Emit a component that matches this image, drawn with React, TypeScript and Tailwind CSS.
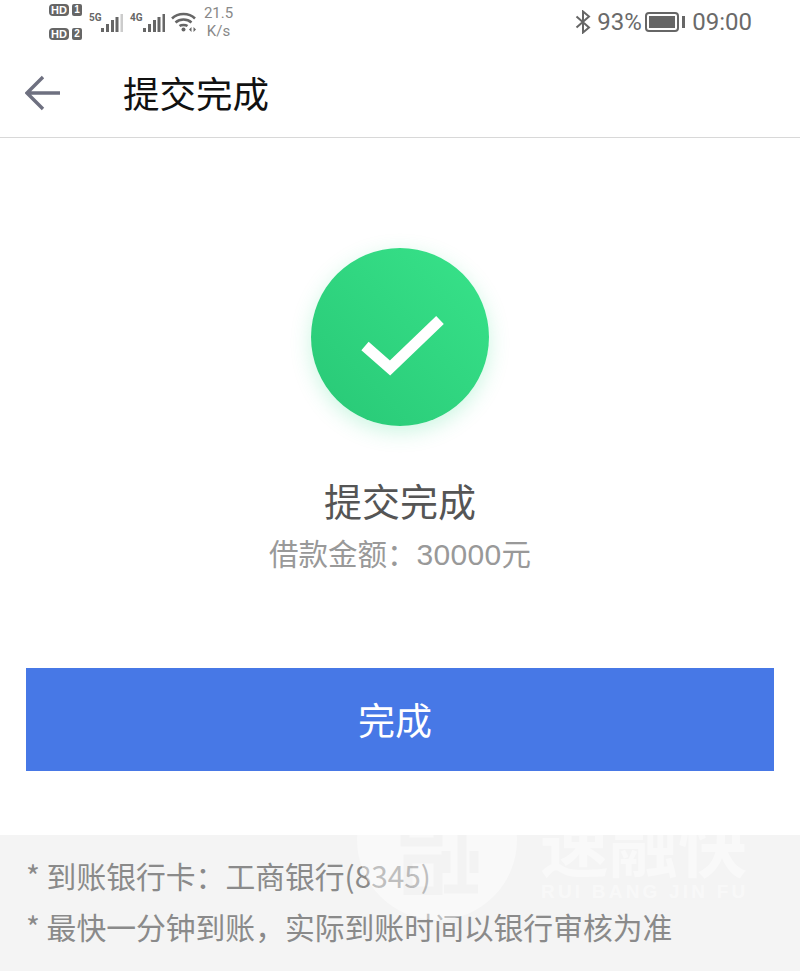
const cjk = "font-['Noto_Sans_CJK_SC','Noto_Sans',sans-serif]";
const COLON = "\uFF1A";
const COMMA = "\uFF0C";

const Signal = ({ last = "#666" }: { last?: string }) => (
  <svg width="22" height="18" viewBox="0 0 22 18">
    <rect x="0" y="14" width="3" height="4" fill="#666" />
    <rect x="5" y="10" width="3" height="8" fill="#666" />
    <rect x="10" y="6" width="3" height="12" fill="#666" />
    <rect x="14.5" y="3" width="3" height="15" fill="#666" />
    <rect x="19.5" y="0" width="2.5" height="18" fill={last} />
  </svg>
);

const SimBadge = ({ n }: { n: string }) => (
  <div className="flex items-center gap-[3px] font-['Liberation_Sans',sans-serif] font-bold text-white text-center">
    <span className="w-[20px] h-[12px] rounded-[4px] bg-[#666] text-[11px] leading-[12px]">HD</span>
    <span className="w-[10px] h-[12px] rounded-[2px] bg-[#666] text-[10px] leading-[12px]">{n}</span>
  </div>
);

const StatusBar = () => (
  <div className="h-[50px] flex justify-between font-['Roboto',sans-serif] text-[#666]">
    <div className="flex items-start pl-[49px] pt-[4px]">
      <div className="flex flex-col gap-[12px] w-[33px]">
        <SimBadge n="1" />
        <SimBadge n="2" />
      </div>
      <div className="flex items-start ml-[7px] mt-[8px]">
        <span className="w-[12px] text-[10px] leading-[11px] font-bold">5G</span>
        <div className="mt-[2px]">
          <Signal last="#ccc" />
        </div>
        <span className="ml-[7px] w-[13px] text-[10px] leading-[11px] font-bold">4G</span>
        <div className="mt-[2px]">
          <Signal />
        </div>
        <svg className="ml-[6px]" width="25" height="20" viewBox="0 0 25 20" fill="none" stroke="#666" strokeWidth="2.5">
          <path d="M1 6.5 C7 0.5 18 0.5 24 6.5" />
          <path d="M4.5 10.5 C9 6.5 16 6.5 20.5 10.5" />
          <path d="M8.5 14 C10.5 12.5 14.5 12.5 16.5 14" />
          <circle cx="12.5" cy="17.5" r="2" fill="#666" stroke="none" />
          <path d="M18 17.5 l2.5 -2.5 v5z M25 17.5 l-2.5 -2.5 v5z" fill="#666" stroke="none" />
        </svg>
      </div>
      <div className="ml-[6px] w-[33px] text-center text-[15px] leading-[18px] text-[#888]">
        <div>21.5</div>
        <div>K/s</div>
      </div>
    </div>
    <div className="flex items-center pr-[48px] pb-[6px] text-[24px] text-[#6a6a6a]">
      <svg width="16" height="24" viewBox="0 0 16 24" fill="none" stroke="#666" strokeWidth="2">
        <path d="M1.5 6.5 L14 17.5 L8 22.5 V1.5 L14 6.5 L1.5 17.5" />
      </svg>
      <span className="ml-[6px] w-[43px]">93%</span>
      <div className="ml-[5px] w-[34px] h-[20px] rounded-[4px] border-2 border-[#666] p-[2px]">
        <div className="h-full w-full bg-[#666]" />
      </div>
      <span className="ml-[3px] w-[3px] h-[12px] bg-[#666]" />
      <span className="ml-[7px]">09:00</span>
    </div>
  </div>
);

const App = () => {
  return (
    <div className={`w-[800px] h-[971px] bg-white flex flex-col overflow-hidden ${cjk}`}>
      <StatusBar />

      <div className="h-[88px] flex items-center border-b border-[#d8d8d8] pl-[25px] pb-[2px]">
        <svg width="36" height="36" viewBox="0 0 36 36" fill="none" stroke="#6e7080" strokeWidth="3.4">
          <path d="M35 18 H3 M18 2 L2 18 L18 34" />
        </svg>
        <h1 className="ml-[62px] text-[36.5px] leading-[48px] text-[#111] font-normal">提交完成</h1>
      </div>

      <div className="flex flex-col items-center pt-[110px]">
        <div className="w-[178px] h-[178px] rounded-full bg-gradient-to-tr from-[#28c876] to-[#38e38a] shadow-[0_6px_20px_rgba(50,220,140,0.25)] flex items-center justify-center">
          <svg className="mt-[14px] ml-[2px]" width="90" height="68" viewBox="0 0 90 68" fill="none" stroke="white" strokeWidth="11">
            <path d="M9 36 L34 58 L84 10" />
          </svg>
        </div>
        <h2 className="mt-[47px] text-[38px] leading-[54px] text-[#555] font-normal">提交完成</h2>
        <p className="mt-[5px] text-[29.5px] leading-[40px] text-[#999]">
          借款金额{COLON}
          <span className="font-['Liberation_Sans',sans-serif] text-[30px] tracking-[0.3px]">30000</span>元
        </p>
      </div>

      <div className="mt-[93px] mx-[26px] h-[103px] bg-[#4778e6] flex items-center justify-center">
        <span className="text-[37px] text-white pr-[10px]">完成</span>
      </div>

      <div className="mt-[64px] flex-1 bg-[#f4f4f4] relative overflow-hidden pl-[26px] pt-[17px] text-[29.8px] leading-[46px] text-[#8a8a8a]">
        <p>* 到账银行卡{COLON}工商银行(8345)</p>
        <p className="mt-[5px]">* 最快一分钟到账{COMMA}实际到账时间以银行审核为准</p>

        {/* watermark over the footer */}
        <div className="absolute left-[357px] top-[-75px] w-[160px] h-[160px] rounded-full bg-white/45" />
        <svg className="absolute left-[400px] top-0" width="80" height="60" viewBox="0 0 80 60" fill="none" stroke="rgba(0,0,0,0.025)" strokeWidth="9">
          <path d="M5 0 V7 H38 V0 M8 24 H38 V56 H8 Z M62 0 V52 M44 54 H78 M46 16 V38 M74 16 V38" />
        </svg>
        <div className="absolute left-[540px] top-[-31px] text-[69px] leading-[76px] text-white/45 font-bold whitespace-nowrap">
          速融快
        </div>
        <div className="absolute left-[541px] top-[47px] text-[19px] leading-[20px] tracking-[3.2px] text-white/45 font-bold font-['Liberation_Sans',sans-serif] whitespace-nowrap">
          RUI BANG JIN FU
        </div>
      </div>
    </div>
  );
};

export default App;
